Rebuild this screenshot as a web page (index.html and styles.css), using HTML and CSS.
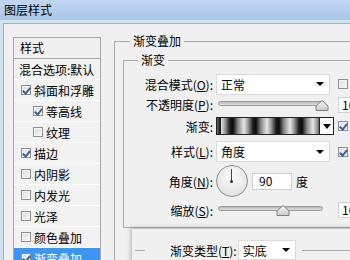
FILE: index.html
```html
<!DOCTYPE html>
<html lang="zh-CN">
<head>
  <meta charset="UTF-8" />
  <title>图层样式</title>
  <link rel="stylesheet" href="styles.css">
</head>
<body>
  <!-- Title Bar -->
  <div class="titlebar">图层样式</div>

  <div class="frame">
    <div class="client">
      <!-- Style List -->
      <div class="sidebar">
        <div class="list-head">样式</div>
        <div class="list">
          <div class="item plain">混合选项:默认</div>
          <div class="item"><span class="cb on"></span>斜面和浮雕</div>
          <div class="item sub"><span class="cb on"></span>等高线</div>
          <div class="item sub"><span class="cb"></span>纹理</div>
          <div class="item"><span class="cb on"></span>描边</div>
          <div class="item"><span class="cb"></span>内阴影</div>
          <div class="item"><span class="cb"></span>内发光</div>
          <div class="item"><span class="cb"></span>光泽</div>
          <div class="item"><span class="cb"></span>颜色叠加</div>
          <div class="item selected"><span class="cb on"></span>渐变叠加</div>
        </div>
      </div>

      <!-- Settings -->
      <div class="main">
        <div class="group outer">
          <div class="group-head"><span class="corner"></span><span class="legend">渐变叠加</span><span class="rule"></span></div>
          <div class="group-body">
            <div class="group inner">
              <div class="group-head"><span class="corner"></span><span class="legend">渐变</span><span class="rule"></span></div>
              <div class="group-body">
                <div class="row r1">
                  <span class="lbl">混合模式(<u>O</u>):</span>
                  <div class="select">正常</div>
                  <span class="cb trail"></span>
                </div>
                <div class="row r2">
                  <span class="lbl">不透明度(<u>P</u>):</span>
                  <div class="slider">
                    <span class="track"></span>
                    <svg class="thumb thumb-full" width="14" height="11" viewBox="0 0 14 11">
                      <defs><linearGradient id="tg" x1="0" y1="0" x2="0" y2="1"><stop offset="0" stop-color="#f8f8f8"/><stop offset="1" stop-color="#c9c9c9"/></linearGradient></defs>
                      <polygon points="7,0.5 13,6 13,10.5 1,10.5 1,6" fill="url(#tg)" stroke="#808080"/>
                    </svg>
                  </div>
                  <span class="num trail-num">100</span>
                </div>
                <div class="row r3">
                  <span class="lbl">渐变:</span>
                  <div class="swatch"></div>
                  <div class="swatch-btn"></div>
                  <span class="cb on trail-sw"></span>
                </div>
                <div class="row r4">
                  <span class="lbl">样式(<u>L</u>):</span>
                  <div class="select">角度</div>
                  <span class="cb on trail"></span>
                </div>
                <div class="row r5">
                  <span class="lbl">角度(<u>N</u>):</span>
                  <div class="dial"></div>
                  <span class="num angle">90</span>
                  <span class="unit">度</span>
                </div>
                <div class="row r6">
                  <span class="lbl">缩放(<u>S</u>):</span>
                  <div class="slider">
                    <span class="track short"></span>
                    <svg class="thumb thumb-mid" width="14" height="11" viewBox="0 0 14 11">
                      <polygon points="7,0.5 13,6 13,10.5 1,10.5 1,6" fill="url(#tg)" stroke="#808080"/>
                    </svg>
                  </div>
                  <span class="num trail-num">100</span>
                </div>
              </div>
            </div>
          </div>
        </div>
      </div>
    </div>
  </div>

  <!-- Gradient Type Panel (overlapping window) -->
  <div class="popup">
    <div class="popup-row">
      <span class="pline"></span>
      <span class="plabel">渐变类型(<u>T</u>):</span>
      <div class="select small">实底</div>
      <span class="prule"></span>
    </div>
  </div>
</body>
</html>
```

FILE: styles.css
```css
* {
  box-sizing: border-box;
}

body {
  margin: 0;
  width: 350px;
  height: 260px;
  overflow: hidden;
  position: relative;
  background: #d3e2f2;
  color: #000;
  font-family: "Noto Sans CJK SC", "Liberation Sans", sans-serif;
  font-size: 12px;
}

u {
  text-decoration: underline;
}

/* Title Bar */
.titlebar {
  height: 20px;
  line-height: 20px;
  padding-left: 4px;
  background: linear-gradient(#c1d7f0, #a8c6e9);
}

.frame {
  padding: 3px 0 0 3px;
}

.client {
  display: flex;
  height: 237px;
  overflow: hidden;
  background: #f0f0f0;
  border-left: 1px solid #9fb1c5;
  border-top: 1px solid #9fb1c5;
}

/* Style List */
.sidebar {
  flex: none;
  width: 88px;
  margin: 13px 0 0 9px;
}

.list-head {
  height: 22px;
  line-height: 20px;
  padding-left: 6px;
  border: 1px solid #a9a9a9;
}

.list {
  border-left: 1px solid #a9a9a9;
  border-right: 1px solid #a9a9a9;
}

.item {
  display: flex;
  align-items: center;
  height: 21px;
  padding-left: 7px;
  border-bottom: 1px solid #ffffff;
  background: #f2f2f2;
  white-space: nowrap;
}

.item.plain {
  padding-left: 5px;
}

.item.sub {
  padding-left: 19px;
}

.item.selected {
  background: #3d95f2;
  color: #fff;
}

.cb {
  position: relative;
  flex: none;
  width: 10px;
  height: 10px;
  margin-right: 3px;
  border: 1px solid #8e8f8f;
  background: linear-gradient(135deg, #dcdcdc, #f8f8f8);
  box-shadow: inset 0 0 0 1px #f4f4f4;
}

.cb.on::after {
  content: "";
  position: absolute;
  left: 2px;
  top: 0;
  width: 3px;
  height: 6px;
  border-right: 2px solid #3a5f9c;
  border-bottom: 2px solid #3a5f9c;
  transform: rotate(40deg);
}

/* Group Boxes */
.main {
  flex: none;
  width: 260px;
  margin: 10px 0 0 13px;
}

.group-head {
  display: flex;
  height: 14px;
  line-height: 14px;
}

.corner {
  flex: none;
  width: 16px;
  margin-top: 7px;
  border-top: 1px solid #ababab;
  border-left: 1px solid #ababab;
}

.inner .corner {
  width: 15px;
}

.legend {
  padding: 0 3px;
}

.rule {
  flex: 1;
  margin-top: 7px;
  border-top: 1px solid #ababab;
}

.group-body {
  border-left: 1px solid #ababab;
}

.outer > .group-body {
  padding: 5px 0 40px 8px;
}

.inner > .group-body {
  padding: 6px 0 4px;
  border-bottom: 1px solid #ababab;
}

/* Rows */
.row {
  display: flex;
  align-items: center;
}

.r1 { height: 22px; }
.r2 { height: 19px; }
.r3 { height: 24px; }
.r4 { height: 27px; }
.r5 { height: 32px; }
.r6 { height: 26px; }

.lbl {
  flex: none;
  width: 92px;
  padding-right: 3px;
  text-align: right;
  white-space: nowrap;
}

.select {
  flex: none;
  display: flex;
  align-items: center;
  width: 114px;
  height: 21px;
  padding-left: 4px;
  background: #fff;
  border: 1px solid #dadada;
}

.select::after {
  content: "";
  margin: 0 5px 0 auto;
  border-left: 4px solid transparent;
  border-right: 4px solid transparent;
  border-top: 4px solid #000;
}

.trail {
  margin-left: 8px;
}

.trail-sw {
  margin-left: 4px;
}

/* Sliders */
.slider {
  position: relative;
  flex: none;
  width: 112px;
  height: 12px;
}

.track {
  position: absolute;
  left: 2px;
  right: 3px;
  top: 2px;
  height: 5px;
  border: 1px solid #9a9a9a;
  border-radius: 3px;
  background: linear-gradient(#b8b8b8, #e2e2e2);
}

.track.short {
  right: 5px;
}

.thumb {
  position: absolute;
  top: 1px;
}

.thumb-full {
  left: 99px;
}

.thumb-mid {
  left: 60px;
}

.num {
  flex: none;
  height: 16px;
  line-height: 14px;
  padding-left: 3px;
  background: #fff;
  border: 1px solid #cfcfcf;
}

.trail-num {
  width: 30px;
  margin-left: 10px;
}

/* Gradient Swatch */
.swatch {
  flex: none;
  width: 104px;
  height: 18px;
  border: 1px solid #222;
  background: repeating-linear-gradient(90deg, #e6e6e6 0px, #9a9a9a 4px, #1c1c1c 9px, #0c0c0c 12px, #8a8a8a 17px, #e6e6e6 23px);
  background-position: 4px 0;
}

.swatch-btn {
  flex: none;
  display: flex;
  align-items: center;
  justify-content: center;
  width: 14px;
  height: 18px;
  background: #fff;
  border: 1px solid #222;
  border-left: none;
}

.swatch-btn::after {
  content: "";
  border-left: 4px solid transparent;
  border-right: 4px solid transparent;
  border-top: 5px solid #000;
}

/* Angle Dial */
.dial {
  position: relative;
  flex: none;
  width: 32px;
  height: 32px;
  border-radius: 50%;
  border: 1px solid #8c8c8c;
  background: radial-gradient(circle at 50% 35%, #fbfbfb, #dcdcdc);
}

.dial::before {
  content: "";
  position: absolute;
  left: 14px;
  top: 3px;
  width: 1px;
  height: 12px;
  background: #444;
}

.dial::after {
  content: "";
  position: absolute;
  left: 13px;
  top: 14px;
  width: 3px;
  height: 3px;
  border-radius: 50%;
  background: #333;
}

.angle {
  width: 40px;
  height: 17px;
  margin-left: 4px;
  padding-left: 6px;
}

.unit {
  margin-left: 4px;
}

/* Gradient Type Panel */
.popup {
  position: absolute;
  left: 132px;
  top: 229px;
  width: 240px;
  height: 40px;
  background: #f0f0f0;
  box-shadow: -1px -1px 4px rgba(0, 0, 0, 0.28);
}

.popup-row {
  display: flex;
  align-items: center;
  height: 20px;
  margin-top: 11px;
}

.pline {
  flex: none;
  width: 10px;
  margin-left: 3px;
  border-top: 1px solid #ababab;
}

.plabel {
  margin-left: 25px;
  white-space: nowrap;
}

.select.small {
  width: 58px;
  height: 20px;
  margin-left: 1px;
}

.prule {
  flex: 1;
  margin-left: 6px;
  border-top: 1px solid #ababab;
}
```
